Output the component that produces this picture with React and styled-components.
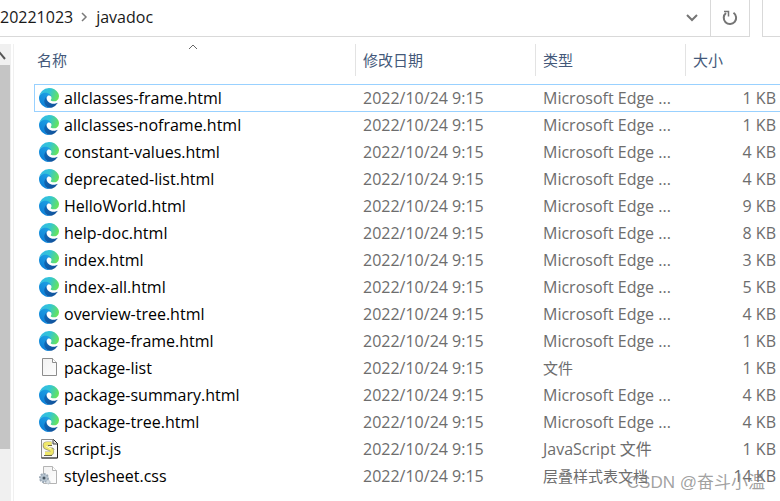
import { useState } from "react";
import styled, { createGlobalStyle, css } from "styled-components";

const EDGE = "Microsoft Edge ...";

const files = [
  { name: "allclasses-frame.html", icon: "edge", type: EDGE, size: 1 },
  { name: "allclasses-noframe.html", icon: "edge", type: EDGE, size: 1 },
  { name: "constant-values.html", icon: "edge", type: EDGE, size: 4 },
  { name: "deprecated-list.html", icon: "edge", type: EDGE, size: 4 },
  { name: "HelloWorld.html", icon: "edge", type: EDGE, size: 9 },
  { name: "help-doc.html", icon: "edge", type: EDGE, size: 8 },
  { name: "index.html", icon: "edge", type: EDGE, size: 3 },
  { name: "index-all.html", icon: "edge", type: EDGE, size: 5 },
  { name: "overview-tree.html", icon: "edge", type: EDGE, size: 4 },
  { name: "package-frame.html", icon: "edge", type: EDGE, size: 1 },
  { name: "package-list", icon: "file", type: "文件", size: 1 },
  { name: "package-summary.html", icon: "edge", type: EDGE, size: 4 },
  { name: "package-tree.html", icon: "edge", type: EDGE, size: 4 },
  { name: "script.js", icon: "script", type: "JavaScript 文件", size: 1 },
  { name: "stylesheet.css", icon: "style", type: "层叠样式表文档", size: 14 },
];

// Chinese glyphs fill the em box, so pure Chinese labels are set a step smaller
const isChinese = (text) => /^[\u4e00-\u9fa5]+$/.test(text);

const Gradients = () => (
  <HiddenSvg aria-hidden="true">
    <defs>
      <linearGradient id="edge-dark" x1="0" y1="0" x2="1" y2="1">
        <stop offset="0" stopColor="#0f6cbc" />
        <stop offset="1" stopColor="#124f96" />
      </linearGradient>
      <linearGradient id="edge-blue" x1="0.7" y1="0" x2="0.2" y2="1">
        <stop offset="0" stopColor="#1fa2e4" />
        <stop offset="0.5" stopColor="#158fdd" />
        <stop offset="1" stopColor="#0a7dd6" />
      </linearGradient>
      <linearGradient id="edge-green" x1="0" y1="0.2" x2="1" y2="0.5">
        <stop offset="0" stopColor="#35b9ea" />
        <stop offset="0.5" stopColor="#33c5d4" />
        <stop offset="1" stopColor="#66e35e" />
      </linearGradient>
      <linearGradient id="paper" x1="0" y1="0" x2="1" y2="1">
        <stop offset="0" stopColor="#f2f2f2" />
        <stop offset="1" stopColor="#fdfdfd" />
      </linearGradient>
    </defs>
  </HiddenSvg>
);

const EdgeIcon = () => (
  <Icon viewBox="0 0 256 256">
    <path
      fill="url(#edge-dark)"
      d="M231 190.500c-3.400 1.800-6.900 3.400-10.500 4.700a101.400 101.400 0 0 1-35.600 6.400c-47 0-87.900-32.300-87.900-73.800.1-11.400 6.400-21.800 16.400-27.200-42.500 1.800-53.400 46.100-53.400 72 0 73.400 67.600 80.800 82.200 80.800 7.900 0 19.700-2.300 26.800-4.600l1.300-.4a128.300 128.300 0 0 0 66.600-52.800 4 4 0 0 0-5.900-5.100z"
    />
    <path
      fill="url(#edge-blue)"
      d="M105.700 241.400a79.200 79.200 0 0 1-22.700-21.300 80.700 80.700 0 0 1 29.500-120c3.200-1.500 8.500-4.100 15.600-4a32.400 32.400 0 0 1 25.700 13 31.900 31.900 0 0 1 6.300 18.700c0-.2 24.500-79.600-80-79.600-43.900 0-80 41.700-80 78.200a130.200 130.200 0 0 0 12.100 56 128 128 0 0 0 156.400 67 75.500 75.500 0 0 1-62.800-8z"
    />
    <path
      fill="url(#edge-green)"
      d="M152.300 148.900c-.9 1-3.400 2.500-3.400 5.600 0 2.600 1.700 5.200 4.800 7.300 14.400 10 41.500 8.700 41.600 8.700a59.600 59.600 0 0 0 30.300-8.300 61.400 61.400 0 0 0 30.400-52.900c.3-22.400-8-37.300-11.300-43.900C223.500 23.900 177.700 0 128 0A128 128 0 0 0 0 126.200c.5-36.500 36.800-66 80-66 3.500 0 23.500.3 42 10.100 16.300 8.600 24.900 18.900 30.800 29.200 6.200 10.700 7.300 24.100 7.300 29.500s-2.700 13.300-7.800 19.900z"
    />
  </Icon>
);

const FileIcon = () => (
  <Icon viewBox="0 0 20 20">
    <path d="M3.500 .5h10l4 4v13h-14z" fill="url(#paper)" stroke="#8d8d8d" />
    <path d="M13.500 .5v4h4" fill="#fff" stroke="#8d8d8d" />
  </Icon>
);

const ScriptIcon = () => (
  <Icon viewBox="0 0 20 20">
    <path d="M2.500 .5h12l4 4v14.500h-16z" fill="#fafafa" stroke="#8c8c8c" />
    <path d="M14.500 .5l4 4v14.500h-16" fill="none" stroke="#222" />
    <path d="M14 1v4h4" fill="#ddd" stroke="#444" />
    <path
      d="M12.500 4.500H8C5 4.500 5 8 7.500 9l4 1.500c2.500 1 2 4-.5 4H6"
      fill="none"
      stroke="#a5a27a"
      strokeWidth="4"
    />
    <path
      d="M12.500 4.500H8C5.500 4.500 5.500 7.500 8 8.500l4 2c2 1.500 1 4-1 4H6"
      fill="none"
      stroke="#f0e868"
      strokeWidth="3"
    />
    <path d="M9 6.500h4M5 16.500h8M13 8.500l2 2" stroke="#6b6948" fill="none" />
    <path d="M7 7l5 3" stroke="#fffbc8" />
  </Icon>
);

const StyleIcon = () => (
  <Icon viewBox="0 0 20 20">
    <path d="M4.500 .5h9l4 4v13h-13z" fill="url(#paper)" stroke="#b4b4b4" />
    <path d="M13.500 .5v4h4" fill="#fff" stroke="#b4b4b4" />
    <circle
      cx="5"
      cy="12"
      r="4"
      fill="#c3cfda"
      stroke="#9aa8b5"
      strokeWidth="2"
      strokeDasharray="2 1"
    />
    <circle cx="5" cy="12" r="3" fill="#b4c2ce" />
    <circle cx="5" cy="12" r="1.500" fill="#46545f" />
    <circle cx="9" cy="16" r="2" fill="#d5dde4" stroke="#a8b4be" strokeDasharray="1 1" />
  </Icon>
);

const icons = {
  edge: EdgeIcon,
  file: FileIcon,
  script: ScriptIcon,
  style: StyleIcon,
};

export const AddressBar = () => (
  <TopBar>
    <Address>
      <Crumbs aria-label="路径">
        <Crumb href="#20221023">20221023</Crumb>
        <svg width="7" height="10" viewBox="0 0 7 10">
          <path d="M1 1l4 4-4 4" fill="none" stroke="#7a7a7a" strokeWidth="1.500" />
        </svg>
        <Crumb href="#javadoc">javadoc</Crumb>
      </Crumbs>
      <BarButton $width={37} aria-label="历史记录">
        <svg width="12" height="8" viewBox="0 0 12 8">
          <path d="M1 1l5 5 5-5" fill="none" stroke="#757575" strokeWidth="2" />
        </svg>
      </BarButton>
      <BarButton $width={39} $divided aria-label="刷新">
        <svg width="16" height="16" viewBox="0 0 16 16">
          <path
            d="M11.500 2.800a6.200 6.200 0 1 1-7.500 .3"
            fill="none"
            stroke="#757575"
            strokeWidth="2"
          />
          <path d="M2 1.500h4.500v5" fill="none" stroke="#757575" strokeWidth="1.500" />
        </svg>
      </BarButton>
    </Address>
    <Search type="search" aria-label="搜索" />
  </TopBar>
);

const App = () => {
  const [selected, setSelected] = useState(files[0].name);

  return (
    <Window>
      <GlobalStyle />
      <Gradients />
      <AddressBar />
      <Content>
        <ScrollTrack>
          <ScrollUp aria-label="向上滚动">
            <svg width="11" height="10" viewBox="0 0 11 10">
              <path d="M-4 7l4-5 5 6" fill="none" stroke="#555" strokeWidth="2" />
            </svg>
          </ScrollUp>
          <ScrollRail>
            <ScrollThumb />
          </ScrollRail>
        </ScrollTrack>
        <ListPane>
          <Table>
            <colgroup>
              <col />
              <Col $width={180} />
              <Col $width={150} />
              <Col $width={95} />
            </colgroup>
            <thead>
              <tr>
                <Th aria-sort="ascending">
                  <HeadButton $first>
                    名称
                    <SortMark width="10" height="6" viewBox="0 0 10 6">
                      <path d="M1 5l4-4 4 4" fill="none" stroke="#666" />
                    </SortMark>
                  </HeadButton>
                </Th>
                <Th>
                  <HeadButton>修改日期</HeadButton>
                </Th>
                <Th>
                  <HeadButton>类型</HeadButton>
                </Th>
                <Th>
                  <HeadButton>大小</HeadButton>
                </Th>
              </tr>
            </thead>
            <tbody>
              {files.map((file) => {
                const TypeIcon = icons[file.icon];
                return (
                  <Row
                    key={file.name}
                    $selected={file.name === selected}
                    onClick={() => setSelected(file.name)}
                  >
                    <NameCell>
                      <FileName>
                        <TypeIcon />
                        {file.name}
                      </FileName>
                    </NameCell>
                    <Cell>2022/10/24 9:15</Cell>
                    <Cell $small={isChinese(file.type)}>{file.type}</Cell>
                    <Cell $right>{file.size} KB</Cell>
                  </Row>
                );
              })}
            </tbody>
          </Table>
        </ListPane>
      </Content>
      <Watermark>CSDN @奋斗小温</Watermark>
    </Window>
  );
};

const GlobalStyle = createGlobalStyle`
  * {
    box-sizing: border-box;
  }
  body {
    margin: 0;
    background: #fff;
    overflow: hidden;
  }
  body, button, input {
    font-family: "Open Sans", "Noto Sans CJK SC", sans-serif;
    font-size: 15px;
  }
  button {
    border: 0;
    padding: 0;
    background: none;
  }
`;

const HiddenSvg = styled.svg`
  position: absolute;
  width: 0;
  height: 0;
`;

const Window = styled.main`
  display: flex;
  flex-direction: column;
  min-height: 100vh;
  position: relative;
`;

const TopBar = styled.header`
  display: flex;
  height: 37px;
  gap: 12px;
`;

const Address = styled.div`
  display: flex;
  flex: 1;
  border: solid #d9d9d9;
  border-width: 0 1px 1px 0;
`;

const Crumbs = styled.nav`
  display: flex;
  flex: 1;
  align-items: center;
  gap: 8px;
  padding-bottom: 2px;
`;

const Crumb = styled.a`
  color: #191919;
  font-size: 16px;
  text-decoration: none;
`;

const BarButton = styled.button`
  display: flex;
  align-items: center;
  justify-content: center;
  width: ${({ $width }) => $width}px;
  border-left: ${({ $divided }) => ($divided ? "1px solid #d9d9d9" : "0")};
`;

const Search = styled.input`
  width: 18px;
  padding: 0;
  border: solid #d9d9d9;
  border-width: 0 0 1px 1px;
  border-radius: 0;
  outline: 0;
  appearance: none;
`;

const Content = styled.div`
  display: flex;
  flex: 1;
  padding-top: 7px;
`;

const ScrollTrack = styled.div`
  display: flex;
  flex-direction: column;
  width: 11px;
  background: #f0f0f0;
`;

const ScrollUp = styled.button`
  height: 21px;
  overflow: hidden;
`;

const ScrollRail = styled.div`
  flex: 1;
  padding-right: 1px;
`;

const ScrollThumb = styled.div`
  height: 88%;
  background: #c5c5c5;
`;

const ListPane = styled.section`
  flex: 1;
  min-width: 0;
  margin-left: 2px;
  padding-left: 20px;
  border-left: 1px solid #f0f0f0;
`;

const Table = styled.table`
  width: 100%;
  table-layout: fixed;
  border-spacing: 0;
`;

const Col = styled.col`
  width: ${({ $width }) => $width}px;
`;

const Th = styled.th`
  height: 40px;
  padding: 0;
  vertical-align: top;
`;

const HeadButton = styled.button`
  display: block;
  position: relative;
  width: 100%;
  height: 32px;
  padding: 0 0 2px 7px;
  border-left: 1px solid #e3e3e3;
  color: #44597a;
  text-align: left;
  ${({ $first }) =>
    $first &&
    css`
      padding-left: 3px;
      border-left: 0;
    `}
`;

const SortMark = styled.svg`
  position: absolute;
  top: 0;
  left: 50%;
  margin-left: -7px;
`;

const Cell = styled.td`
  height: 27px;
  padding: 0 4px 0 8px;
  color: #6d6d6d;
  font-size: ${({ $small }) => ($small ? 15 : 16)}px;
  white-space: nowrap;
  text-align: ${({ $right }) => ($right ? "right" : "left")};
  line-height: 20px;
`;

const NameCell = styled(Cell)`
  padding-left: 5px;
  color: #000;
`;

const FileName = styled.div`
  display: flex;
  align-items: center;
  gap: 5px;
`;

const Row = styled.tr`
  ${({ $selected }) =>
    $selected &&
    css`
      td {
        box-shadow: inset 0 1px #99d1ff, 0 1px #99d1ff;
      }
      td:first-child {
        box-shadow: inset 1px 1px #99d1ff, 0 1px #99d1ff;
      }
    `}
`;

const Icon = styled.svg`
  flex: none;
  width: 20px;
  height: 20px;
`;

const Watermark = styled.span`
  position: absolute;
  right: 15px;
  bottom: 6px;
  color: rgba(120, 120, 120, 0.7);
  font-family: "Liberation Sans", "Noto Sans CJK SC", sans-serif;
  font-size: 17px;
  line-height: 24px;
  pointer-events: none;
`;

export default App;
